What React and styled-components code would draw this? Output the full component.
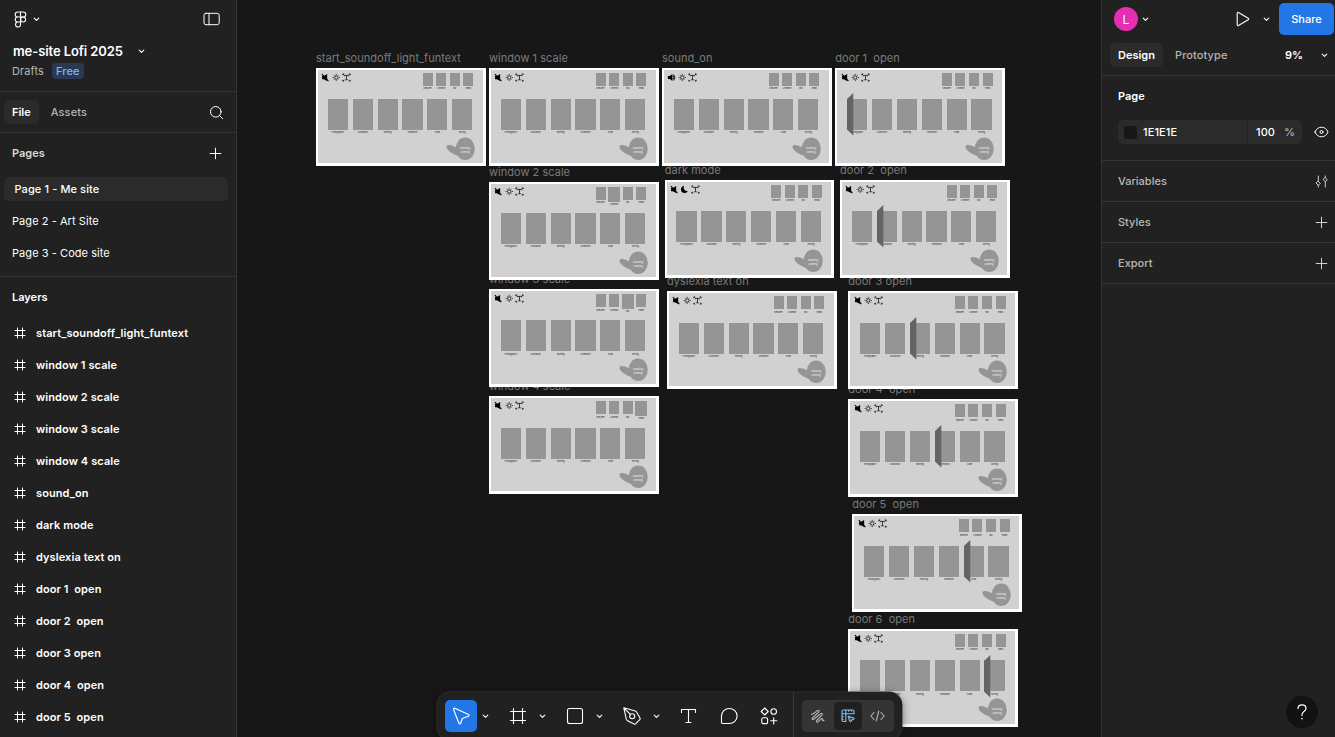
import React from 'react';
import styled, { createGlobalStyle } from 'styled-components';

const Global = createGlobalStyle`
  * { box-sizing: border-box; }
  html, body { margin: 0; background: #171717; }
  body { font-family: Inter, "Liberation Sans", sans-serif; font-size: 11px; color: #fff; overflow: hidden; }
  svg { display: block; flex: none; }
`;

const Editor = styled.div`
  position: relative;
  display: flex;
  width: 1335px;
  height: 737px;
  overflow: hidden;
`;

const LeftPanel = styled.aside`
  display: flex;
  flex-direction: column;
  width: 237px;
  background: #212121;
  border-right: 1px solid #343434;
`;

const RightPanel = styled.aside`
  display: flex;
  flex-direction: column;
  width: 234px;
  background: #212121;
  border-left: 1px solid #343434;
`;

const Canvas = styled.main`
  position: relative;
  flex: 1;
  background: #171717;
`;

const Text = styled.span`
  font-size: ${p => p.$size || 11}px;
  font-weight: ${p => p.$weight || 500};
  color: ${p => p.$color || '#fff'};
  letter-spacing: ${p => p.$track || 0}px;
  line-height: 16px;
  white-space: pre;
`;

const FileHeader = styled.header`
  height: 92px;
  padding: 10px 16px 0 12px;
  border-bottom: 1px solid #343434;
`;

const HeaderRow = styled.div`
  display: flex;
  align-items: center;
  height: ${p => p.$h}px;
  margin-top: ${p => p.$mt || 0}px;
  gap: ${p => p.$gap || 0}px;
  padding-left: ${p => p.$pl || 0}px;
`;

const Spacer = styled.div`
  flex: 1;
`;

const Badge = styled.span`
  display: flex;
  align-items: center;
  height: 16px;
  padding: 0 4px;
  border-radius: 4px;
  background: #2b3852;
`;

const TabBar = styled.nav`
  display: flex;
  align-items: center;
  height: ${p => p.$h}px;
  padding: ${p => p.$pad};
  border-bottom: 1px solid #343434;
`;

const Tab = styled.button`
  display: flex;
  align-items: center;
  height: 24px;
  padding: 0 8px;
  margin-right: ${p => p.$mr || 0}px;
  border: 0;
  border-radius: 5px;
  font-family: inherit;
  background: ${p => (p.$active ? '#2b2b2b' : 'transparent')};
`;

const PagesSection = styled.section`
  height: 144px;
  border-bottom: 1px solid #343434;
`;

const SectionTitle = styled.div`
  display: flex;
  align-items: center;
  justify-content: space-between;
  height: 40px;
  padding: 0 14px 0 12px;
`;

const PageRow = styled.div`
  display: flex;
  align-items: center;
  height: 24px;
  margin: 4px 8px 8px 4px;
  padding-left: ${p => (p.$active ? 10.5 : 8)}px;
  border-radius: 5px;
  background: ${p => (p.$active ? '#2b2b2b' : 'transparent')};
`;

const LayerRow = styled.div`
  display: flex;
  align-items: center;
  flex: none;
  gap: 10px;
  height: 32px;
  padding-left: 14px;
`;

const Avatar = styled.div`
  display: flex;
  align-items: center;
  justify-content: center;
  width: 24px;
  height: 24px;
  margin-right: 4px;
  border-radius: 50%;
  background: #e52eb1;
  font-size: 12px;
`;

const TopActions = styled.div`
  display: flex;
  align-items: center;
  height: 35px;
  padding: 3px 1px 0 12px;
`;

const ShareButton = styled.button`
  display: flex;
  align-items: center;
  justify-content: center;
  width: 55px;
  height: 32px;
  margin-left: 9px;
  padding: 0 0 1px;
  border: 0;
  border-radius: 5px;
  background: #2376e5;
  font-family: inherit;
`;

const PlayGroup = styled.div`
  display: flex;
  align-items: center;
  gap: 13px;
`;

const PageProps = styled.section`
  height: 85px;
  padding: 12px 6px 0 16px;
  border-bottom: 1px solid #343434;
`;

const ColorRow = styled.div`
  display: flex;
  align-items: center;
  justify-content: space-between;
  margin-top: 16px;
`;

const ColorField = styled.div`
  display: flex;
  align-items: center;
  height: 24px;
  width: 184px;
  border-radius: 5px;
  background: #2b2b2b;
`;

const Swatch = styled.span`
  width: 13px;
  height: 13px;
  margin: 0 6px 0 6px;
  border-radius: 2px;
  background: #171717;
`;

const OpacityPart = styled.div`
  display: flex;
  align-items: center;
  justify-content: space-between;
  width: 55px;
  height: 24px;
  padding: 0 7px 0 8px;
  border-left: 1px solid #212121;
`;

const PropRow = styled.div`
  display: flex;
  align-items: center;
  justify-content: space-between;
  height: 41px;
  padding: 0 7px 0 16px;
  border-bottom: 1px solid #343434;
`;

/* Artboards are placed freely on the canvas. */
const Artboard = styled.article`
  position: absolute;
  left: ${p => p.$x - 237}px;
  top: ${p => p.$y}px;
  width: 169.5px;
  height: 97.5px;
  background: #d1d1d1;
  border: solid #fff;
  border-width: 2.4px 3px 3px 2px;
`;

const ArtboardName = styled.div`
  position: absolute;
  left: ${p => p.$x - 237}px;
  top: ${p => p.$y - 18}px;
  font-size: 11px;
  line-height: 16px;
  letter-spacing: 0.03px;
  color: #7a7a7a;
  white-space: pre;
`;

const BoardTop = styled.div`
  display: flex;
  justify-content: space-between;
  height: 29.2px;
  padding: 3px 9.2px 0 3.4px;
`;

const BoardIcons = styled.div`
  display: flex;
  gap: 1.8px;
`;

const Windows = styled.div`
  display: flex;
  gap: 3.6px;
`;

const WindowItem = styled.div`
  display: flex;
  flex-direction: column;
  align-items: center;
  width: 10px;
`;

const WindowBox = styled.div`
  flex: none;
  width: ${p => (p.$big ? 12 : 10)}px;
  height: ${p => (p.$big ? 14.6 : 13)}px;
  background: #959595;
`;

const Doors = styled.div`
  display: flex;
  gap: 4.7px;
  padding-left: 9.8px;
`;

const DoorItem = styled.div`
  position: relative;
  display: flex;
  flex-direction: column;
  align-items: center;
  width: 20.2px;
`;

const DoorBox = styled.div`
  width: 100%;
  height: 31px;
  background: #959595;
`;

const Caption = styled.span`
  margin-top: 1.3px;
  font-size: 2.1px;
  line-height: 3px;
  color: #222;
  white-space: nowrap;
`;

const OpenDoor = styled.svg`
  position: absolute;
  left: 0;
  top: -5.8px;
`;

const Bubble = styled.svg`
  position: absolute;
  left: 127.5px;
  top: 66.6px;
`;

const Toolbar = styled.div`
  position: absolute;
  left: 437px;
  top: 692px;
  display: flex;
  align-items: center;
  width: 465px;
  height: 48px;
  padding: 0 8px;
  border-radius: 13px;
  background: #212121;
  box-shadow: 0 0 0 0.5px #3a3a3a, 0 2px 8px rgba(0, 0, 0, 0.5);
`;

const Tool = styled.div`
  display: flex;
  align-items: center;
  justify-content: center;
  width: 32px;
  height: 32px;
  margin-right: ${p => p.$mr || 0}px;
  border-radius: 5px;
  background: ${p => (p.$active ? '#2376e5' : 'transparent')};
`;

const ToolCaret = styled.div`
  display: flex;
  justify-content: center;
  width: 17px;
  margin-right: 8px;
`;

const Divider = styled.div`
  width: 1px;
  height: 48px;
  margin: 0 8px 0 8px;
  background: #3a3a3a;
`;

const ModeSwitch = styled.div`
  display: flex;
  align-items: center;
  gap: 2px;
  width: 92px;
  height: 32px;
  padding: 0 2px;
  border-radius: 5px;
  background: #343434;
`;

const Mode = styled.div`
  display: flex;
  align-items: center;
  justify-content: center;
  width: 28px;
  height: 28px;
  border-radius: 4px;
  background: ${p => (p.$active ? '#202020' : 'transparent')};
`;

const Help = styled.div`
  position: absolute;
  left: 1286px;
  top: 696px;
  display: flex;
  align-items: center;
  justify-content: center;
  width: 32px;
  height: 32px;
  border-radius: 50%;
  background: #121212;
`;

const Ico = ({ w, h = w, color = '#fff', sw = 1, children }) => (
  <svg width={w} height={h} viewBox={`0 0 ${w} ${h}`} fill="none" stroke={color} strokeWidth={sw} strokeLinecap="round" strokeLinejoin="round">
    {children}
  </svg>
);

const Caret = () => <Ico w={7} h={5} sw={1.1}><path d="M1.200 1.200 3.500 3.400 5.800 1.200" /></Ico>;
const Plus = ({ color }) => <Ico w={13} color={color}><path d="M6.500 1.200v10.600M1.200 6.500h10.600" /></Ico>;
const Logo = () => (
  <Ico w={13} h={17} sw={1.1}>
    <path d="M6.500 1H3.700a2.500 2.500 0 0 0 0 5h2.800zM6.500 1h2.800a2.500 2.500 0 0 1 0 5H6.500zM6.500 6H3.700a2.500 2.500 0 0 0 0 5h2.800zM6.500 11H3.700A2.500 2.500 0 1 0 6.500 13.500z" />
    <circle cx="9.100" cy="8.500" r="2.500" />
  </Ico>
);
const FrameSmall = () => <Ico w={12}><path d="M3.500 1v10M8.500 1v10M1 3.500h10M1 8.500h10" /></Ico>;
const PanelIcon = () => <Ico w={17} h={14}><rect x="1" y="1.300" width="15.200" height="11.400" rx="2" /><path d="M6 1.300v11.400" /></Ico>;
const SearchIcon = () => <Ico w={15} h={15}><circle cx="6.800" cy="6.800" r="5.300" /><path d="m10.700 10.700 3 3" /></Ico>;
const PlayIcon = () => <Ico w={14} h={16} sw={1.1}><path d="M1.200 2.200v11.600c0 .8.700 1.100 1.300.7l9.700-5.700c.6-.4.600-1.200 0-1.600L2.500 1.500c-.6-.4-1.300-.1-1.300.7z" /></Ico>;
const EyeIcon = () => (
  <Ico w={15} h={12}>
    <path d="M1 6C2.200 2.800 4.700 1.200 7.500 1.200S12.800 2.800 14 6c-1.200 3.200-3.700 4.800-6.500 4.800S2.200 9.200 1 6z" />
    <circle cx="7.500" cy="6" r="1.500" />
  </Ico>
);
const VariablesIcon = () => (
  <Ico w={13} h={13} color="#d0d0d0">
    <path d="M3.300 1v5.300M3.300 10.300V12M10.300 12V6.700M10.300 2.700V1" />
    <path d="m3.300 6.300 2 2-2 2-2-2zM10.300 2.700l2 2-2 2-2-2z" />
  </Ico>
);
const HelpIcon = () => (
  <Ico w={12} h={18} sw={1.2}>
    <path d="M2 5.600C2 3.100 3.700 1.900 6 1.900s4 1.300 4 3.500c0 3.100-4 3.100-4 6.200v.8" />
    <path d="M6 15.600v.1" strokeWidth="1.500" />
  </Ico>
);

const CursorIcon = () => (
  <Ico w={19} h={19} sw={1.2}>
    <path d="M1.600 2.600 6.900 16.300c.4.900 1.500.8 1.800-.1l1.300-3.900c.2-.6.600-1 1.200-1.300l5.200-1.800c.9-.3.900-1.400.1-1.700L2.900 1.300c-.9-.3-1.600.4-1.300 1.300z" />
  </Ico>
);
const FrameIcon = () => <Ico w={18} h={18} sw={1.1}><path d="M4.500 1.500v15M13.500 1.500v15M1.500 4.500h15M1.500 13.500h15" /></Ico>;
const RectIcon = () => <Ico w={18} h={18} sw={1.1}><rect x="1.500" y="1.500" width="15" height="15" rx="2" /></Ico>;
const PenIcon = () => (
  <Ico w={20} h={20} sw={1.1}>
    <path d="M1.800 1.800 4.300 13.200c.2.700.6 1.200 1.200 1.500l6.600 3.400c.5.200 1 .2 1.400-.2l4.300-4.300c.4-.4.500-1 .2-1.500l-3.300-5.900c-.3-.6-.8-1-1.500-1.200zM1.800 1.800l6.600 6.600" />
    <circle cx="10.200" cy="10.200" r="2.500" />
  </Ico>
);
const TypeIcon = () => <Ico w={18} h={16} sw={1.1}><path d="M1.500 4.500V1.500h14v3M8.500 1.500v13M6 14.500h5" /></Ico>;
const CommentIcon = () => <Ico w={19} h={18} sw={1.1}><path d="M1.500 9A7.800 7.500 0 1 1 9.300 16.500H2.600a1.100 1.100 0 0 1-1.100-1.100z" /></Ico>;
const ActionsIcon = () => (
  <Ico w={18} h={18} sw={1.1}>
    <path d="M4.700 1 8.200 4.500 4.700 8 1.200 4.500z" />
    <circle cx="13.700" cy="4.500" r="2.800" />
    <rect x="1.800" y="10.800" width="5.800" height="5.800" rx="1.300" />
    <path d="M13.700 10.700v6.200M10.600 13.800h6.200" />
  </Ico>
);
const DrawIcon = () => (
  <Ico w={16} h={15} color="#b4b4b4" sw={1.1}>
    <path d="M1.500 5.500C3.500 5 6 2.500 7.800 1.600c1-.5 1.800.2 1.100 1.200L2.400 9c-.8 1.100.1 1.900 1.200 1.200C6.200 8.600 9 5.400 11.200 4.500c1-.3 1.500.5.9 1.300L6.700 11.500c-.8 1.200.1 2 1.200 1.400 1.800-1 2.700-2.900 4-3.400.9-.2.900.7.6 1.400-.2.800.5 1 1.500.3" />
  </Ico>
);
const DesignIcon = () => (
  <Ico w={14} h={14} color="#7cc4f8" sw={1.1}>
    <path d="M5 12.500H2.200A1.200 1.200 0 0 1 1 11.300V2.200A1.200 1.200 0 0 1 2.200 1h9.600A1.200 1.200 0 0 1 13 2.200V4.800H4.800v7.700M1 4.800h3.800V1M7.600 1v1.200M10.300 1v1.200M1 7.600h1.200M1 10.200h1.200" />
    <path d="m7.200 7.200 1.500 5c.2.600 1 .6 1.300.1l.8-1.200 1.800-.8c.6-.3.600-1.100 0-1.400z" fill="#26445c" />
  </Ico>
);
const CodeIcon = () => <Ico w={16} h={12} color="#b4b4b4" sw={1.1}><path d="M4 2.500.9 6 4 9.500M11 2.500 14.100 6 11 9.500M8.800 1 6.200 11" /></Ico>;

const Muted = () => (
  <svg width="8.500" height="9" viewBox="0 0 8 8">
    <path d="M1 2.500h1.600L5.800.6v6.600L2.500 5.600H1z" fill="#000" />
    <path d="M.8.800 7 7.400" stroke="#000" strokeWidth="1" />
  </svg>
);
const Speaker = () => (
  <svg width="8.500" height="9" viewBox="0 0 8 8">
    <path d="M.8 2.600h1.800L5 .8v6.400L2.600 5.400H.8z" fill="#000" />
    <path d="M5.500 2.200q1.400 1.800 0 3.600M6.200 1.200q2.200 2.800 0 5.600" stroke="#000" strokeWidth=".9" fill="none" />
  </svg>
);
const Sun = () => (
  <svg width="8.500" height="9" viewBox="0 0 8 8" stroke="#111" fill="none">
    <circle cx="4" cy="4" r="1.600" strokeWidth=".8" />
    <path d="M4 .6v.9M4 6.500v.9M.6 4h.9M6.500 4h.9M1.600 1.600l.6.6M5.800 5.800l.6.6M6.400 1.600l-.6.6M2.200 5.800l-.6.6" strokeWidth=".8" />
  </svg>
);
const Moon = () => (
  <svg width="8.500" height="9" viewBox="0 0 8 8">
    <path d="M3.800.8A3.300 3.300 0 1 0 7.400 5.100 3 3 0 0 1 3.800.8z" fill="#000" />
  </svg>
);
const TextScan = () => (
  <svg width="9" height="9" viewBox="0 0 9 9" stroke="#111" fill="none" strokeWidth=".8">
    <path d="M.8 2.200V.9h1.400M6.800.9h1.400v1.300M.8 6.800v1.300h1.400M6.800 8.100h1.400V6.800M2.300 3.300v-.9h4.400v.9M4.500 2.400v4.300M3.200 6.800h2.600" />
    <path d="m1 1 1.400 1.400M8 1 6.600 2.400M1 8l1.200-1.200M8 8 6.800 6.800" strokeWidth=".6" />
  </svg>
);

const WINDOW_NAMES = ['Resume', 'Linkedin', 'Bio', 'Email'];
const DOOR_NAMES = ['Photography', 'Illustration', 'Painting', 'Animation', 'Code', 'Writing'];

const BOARDS = [
  { name: 'start_soundoff_light_funtext', x: 316, y: 68 },
  { name: 'window 1 scale', x: 489, y: 68, win: 0 },
  { name: 'window 2 scale', x: 489, y: 182, win: 1 },
  { name: 'window 3 scale', x: 489, y: 289.3, win: 2 },
  { name: 'window 4 scale', x: 489, y: 396.4, win: 3 },
  { name: 'sound_on', x: 662, y: 68, sound: true },
  { name: 'dark mode', x: 664.7, y: 180, dark: true },
  { name: 'dyslexia text on', x: 667, y: 291.4 },
  { name: 'door 1  open', x: 835.3, y: 68, door: 0 },
  { name: 'door 2  open', x: 840, y: 180, door: 1 },
  { name: 'door 3 open', x: 848.3, y: 291.4, door: 2 },
  { name: 'door 4  open', x: 848.3, y: 399.4, door: 3 },
  { name: 'door 5  open', x: 852.3, y: 514.4, door: 4 },
  { name: 'door 6  open', x: 848.3, y: 629.2, door: 5 },
];

const Wireframe = ({ board }) => (
  <Artboard $x={board.x} $y={board.y}>
    <BoardTop>
      <BoardIcons>
        {board.sound ? <Speaker /> : <Muted />}
        {board.dark ? <Moon /> : <Sun />}
        <TextScan />
      </BoardIcons>
      <Windows>
        {WINDOW_NAMES.map((n, i) => (
          <WindowItem key={n}>
            <WindowBox $big={board.win === i && i > 0} />
            <Caption>{n}</Caption>
          </WindowItem>
        ))}
      </Windows>
    </BoardTop>
    <Doors>
      {DOOR_NAMES.map((n, i) => (
        <DoorItem key={n}>
          <DoorBox />
          <Caption>{n}</Caption>
          {board.door === i && (
            <OpenDoor width="7" height="43" viewBox="0 0 7 43">
              <path d="M0 6 6.300 0v42.400L0 36.600z" fill="#646464" />
            </OpenDoor>
          )}
        </DoorItem>
      ))}
    </Doors>
    <Bubble width="30" height="24" viewBox="0 0 30 24" fill="#959595">
      <ellipse cx="19.200" cy="11.800" rx="9.600" ry="11.300" />
      <path d="M.6 9.200C1.600 7.200 6 8 11.500 11L13 19C7 17.500-.6 12.500.6 9.200z" />
      <text x="19" y="12.400" fontSize="2.600" fill="#f0f0f0" textAnchor="middle">Drawing</text>
      <text x="19" y="15.700" fontSize="2.600" fill="#f0f0f0" textAnchor="middle">coming</text>
    </Bubble>
  </Artboard>
);

export default function App() {
  return (
    <>
      <Global />
      <Editor>
        <LeftPanel>
          <FileHeader>
            <HeaderRow $h={18} $gap={5.5} $pl={2}>
              <Logo />
              <Caret />
              <Spacer />
              <PanelIcon />
            </HeaderRow>
            <HeaderRow $h={24} $mt={11} $gap={15} $pl={1}>
              <Text $size={13} $weight={600} $track={-0.09}>me-site Lofi 2025</Text>
              <Caret />
            </HeaderRow>
            <HeaderRow $h={16} $gap={8}>
              <Text $weight={400} $color="#b4b4b4" $track={0.12}>Drafts</Text>
              <Badge><Text $color="#7cb8f8" $track={0.12}>Free</Text></Badge>
            </HeaderRow>
          </FileHeader>
          <TabBar $h={41} $pad="0 12px 0 4px">
            <Tab $active $mr={4}><Text $weight={600}>File</Text></Tab>
            <Tab><Text $color="#b4b4b4" $track={0.1}>Assets</Text></Tab>
            <Spacer />
            <SearchIcon />
          </TabBar>
          <PagesSection>
            <SectionTitle><Text $weight={600} $color="#d8d8d8">Pages</Text><Plus /></SectionTitle>
            <PageRow $active><Text $track={0.1}>Page 1 - Me site</Text></PageRow>
            <PageRow><Text $weight={400} $track={0.06}>Page 2 - Art Site</Text></PageRow>
            <PageRow><Text $weight={400} $track={0.06}>Page 3 - Code site</Text></PageRow>
          </PagesSection>
          <SectionTitle><Text $weight={600}>Layers</Text></SectionTitle>
          {BOARDS.slice(0, 13).map(b => (
            <LayerRow key={b.name}><FrameSmall /><Text $weight={600} $track={0.09}>{b.name}</Text></LayerRow>
          ))}
        </LeftPanel>
        <Canvas>
          {BOARDS.map(b => <ArtboardName key={b.name} $x={b.x} $y={b.y}>{b.name}</ArtboardName>)}
          {BOARDS.map(b => <Wireframe key={b.name} board={b} />)}
        </Canvas>
        <RightPanel>
          <TopActions>
            <Avatar>L</Avatar>
            <Caret />
            <Spacer />
            <PlayGroup><PlayIcon /><Caret /></PlayGroup>
            <ShareButton><Text>Share</Text></ShareButton>
          </TopActions>
          <TabBar $h={41} $pad="0 7px 0 8px">
            <Tab $active $mr={4}><Text $weight={600}>Design</Text></Tab>
            <Tab><Text $color="#b4b4b4" $track={0.1}>Prototype</Text></Tab>
            <Spacer />
            <HeaderRow $h={16} $gap={18}><Text $weight={600}>9%</Text><Caret /></HeaderRow>
          </TabBar>
          <PageProps>
            <HeaderRow $h={16}><Text $weight={600}>Page</Text></HeaderRow>
            <ColorRow>
              <ColorField>
                <Swatch />
                <Text $track={0.1}>1E1E1E</Text>
                <Spacer />
                <OpacityPart><Text $track={0.1}>100</Text><Text $color="#b4b4b4">%</Text></OpacityPart>
              </ColorField>
              <EyeIcon />
            </ColorRow>
          </PageProps>
          <PropRow><Text $color="#b8b8b8">Variables</Text><VariablesIcon /></PropRow>
          <PropRow><Text $color="#b8b8b8">Styles</Text><Plus color="#d0d0d0" /></PropRow>
          <PropRow><Text $color="#b8b8b8">Export</Text><Plus color="#d0d0d0" /></PropRow>
        </RightPanel>
        <Toolbar>
          <Tool $active><CursorIcon /></Tool><ToolCaret><Caret /></ToolCaret>
          <Tool><FrameIcon /></Tool><ToolCaret><Caret /></ToolCaret>
          <Tool><RectIcon /></Tool><ToolCaret><Caret /></ToolCaret>
          <Tool><PenIcon /></Tool><ToolCaret><Caret /></ToolCaret>
          <Tool $mr={8}><TypeIcon /></Tool>
          <Tool $mr={8}><CommentIcon /></Tool>
          <Tool><ActionsIcon /></Tool>
          <Divider />
          <ModeSwitch>
            <Mode><DrawIcon /></Mode>
            <Mode $active><DesignIcon /></Mode>
            <Mode><CodeIcon /></Mode>
          </ModeSwitch>
        </Toolbar>
        <Help><HelpIcon /></Help>
      </Editor>
    </>
  );
}
